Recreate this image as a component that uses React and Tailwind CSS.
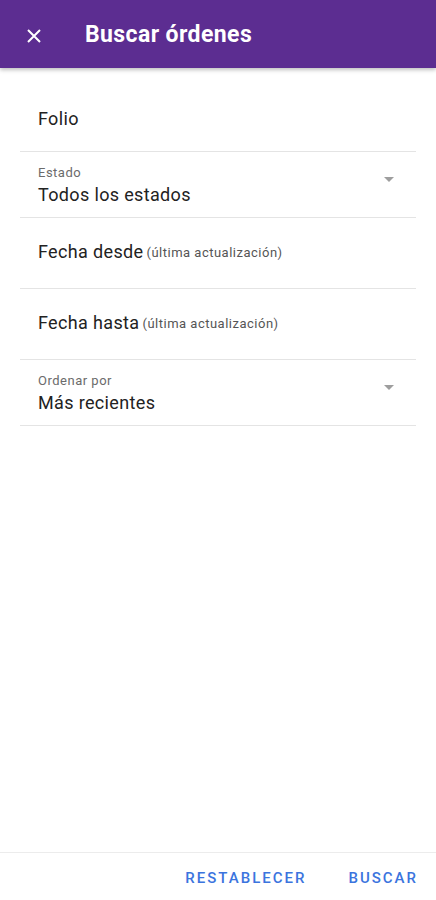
import React from "react";

function Caret() {
  return (
    <svg width="10" height="5" viewBox="0 0 10 5" className="mr-[22px] mb-[12px]">
      <path d="M0 0 L10 0 L5 5 Z" fill="#9e9e9e" />
    </svg>
  );
}

function SelectRow({ label, value }) {
  return (
    <div className="flex items-center justify-between border-b border-[#e4e4e4] h-[66px] pt-[2px]">
      <div className="pl-[18px]">
        <div className="text-[13px] leading-[16px] tracking-[0.5px] text-[#6b6b6b]">{label}</div>
        <div className="text-[18px] leading-[24px] tracking-[0.35px] mt-[2px] text-[#222]">{value}</div>
      </div>
      <Caret />
    </div>
  );
}

function DateRow({ label }) {
  return (
    <div className="h-[71px] flex items-start pt-[22px] pl-[18px] border-b border-[#e4e4e4]">
      <span className="text-[18px] leading-[24px] tracking-[0.35px] text-[#222]">{label}</span>
      <span className="text-[13px] leading-[24px] tracking-[0.5px] text-[#555] ml-[3px] mt-[1px]">(última actualización)</span>
    </div>
  );
}

export default function App() {
  return (
    <div className="h-[900px] w-[436px] flex flex-col bg-white font-['Roboto',sans-serif]">
      {/* Header */}
      <div className="h-[68px] bg-[#5c2d91] flex items-center pt-[3px] shadow-[0_2px_4px_rgba(0,0,0,0.25)] z-10">
        <svg width="14" height="14" viewBox="0 0 14 14" className="ml-[27px]">
          <path d="M1 1 L13 13 M13 1 L1 13" stroke="white" strokeWidth="2" />
        </svg>
        <h1 className="ml-[44px] text-white text-[23px] font-bold tracking-[0.4px]">Buscar órdenes</h1>
      </div>

      {/* Form */}
      <div className="flex-1 px-5">
        <div className="h-[84px] flex items-end pb-[20px] pl-[18px] border-b border-[#e4e4e4]">
          <span className="text-[18px] leading-[24px] tracking-[0.35px] text-[#222]">Folio</span>
        </div>
        <SelectRow label="Estado" value="Todos los estados" />
        <DateRow label="Fecha desde" />
        <DateRow label="Fecha hasta" />
        <SelectRow label="Ordenar por" value="Más recientes" />
      </div>

      {/* Footer */}
      <div className="h-[48px] border-t border-[#ececec] flex items-center justify-end pr-[18px] pt-[4px] gap-[42px]">
        <button className="text-[15px] font-medium tracking-[2px] text-[#3b74de]">RESTABLECER</button>
        <button className="text-[15px] font-medium tracking-[2px] text-[#3b74de]">BUSCAR</button>
      </div>
    </div>
  );
}
